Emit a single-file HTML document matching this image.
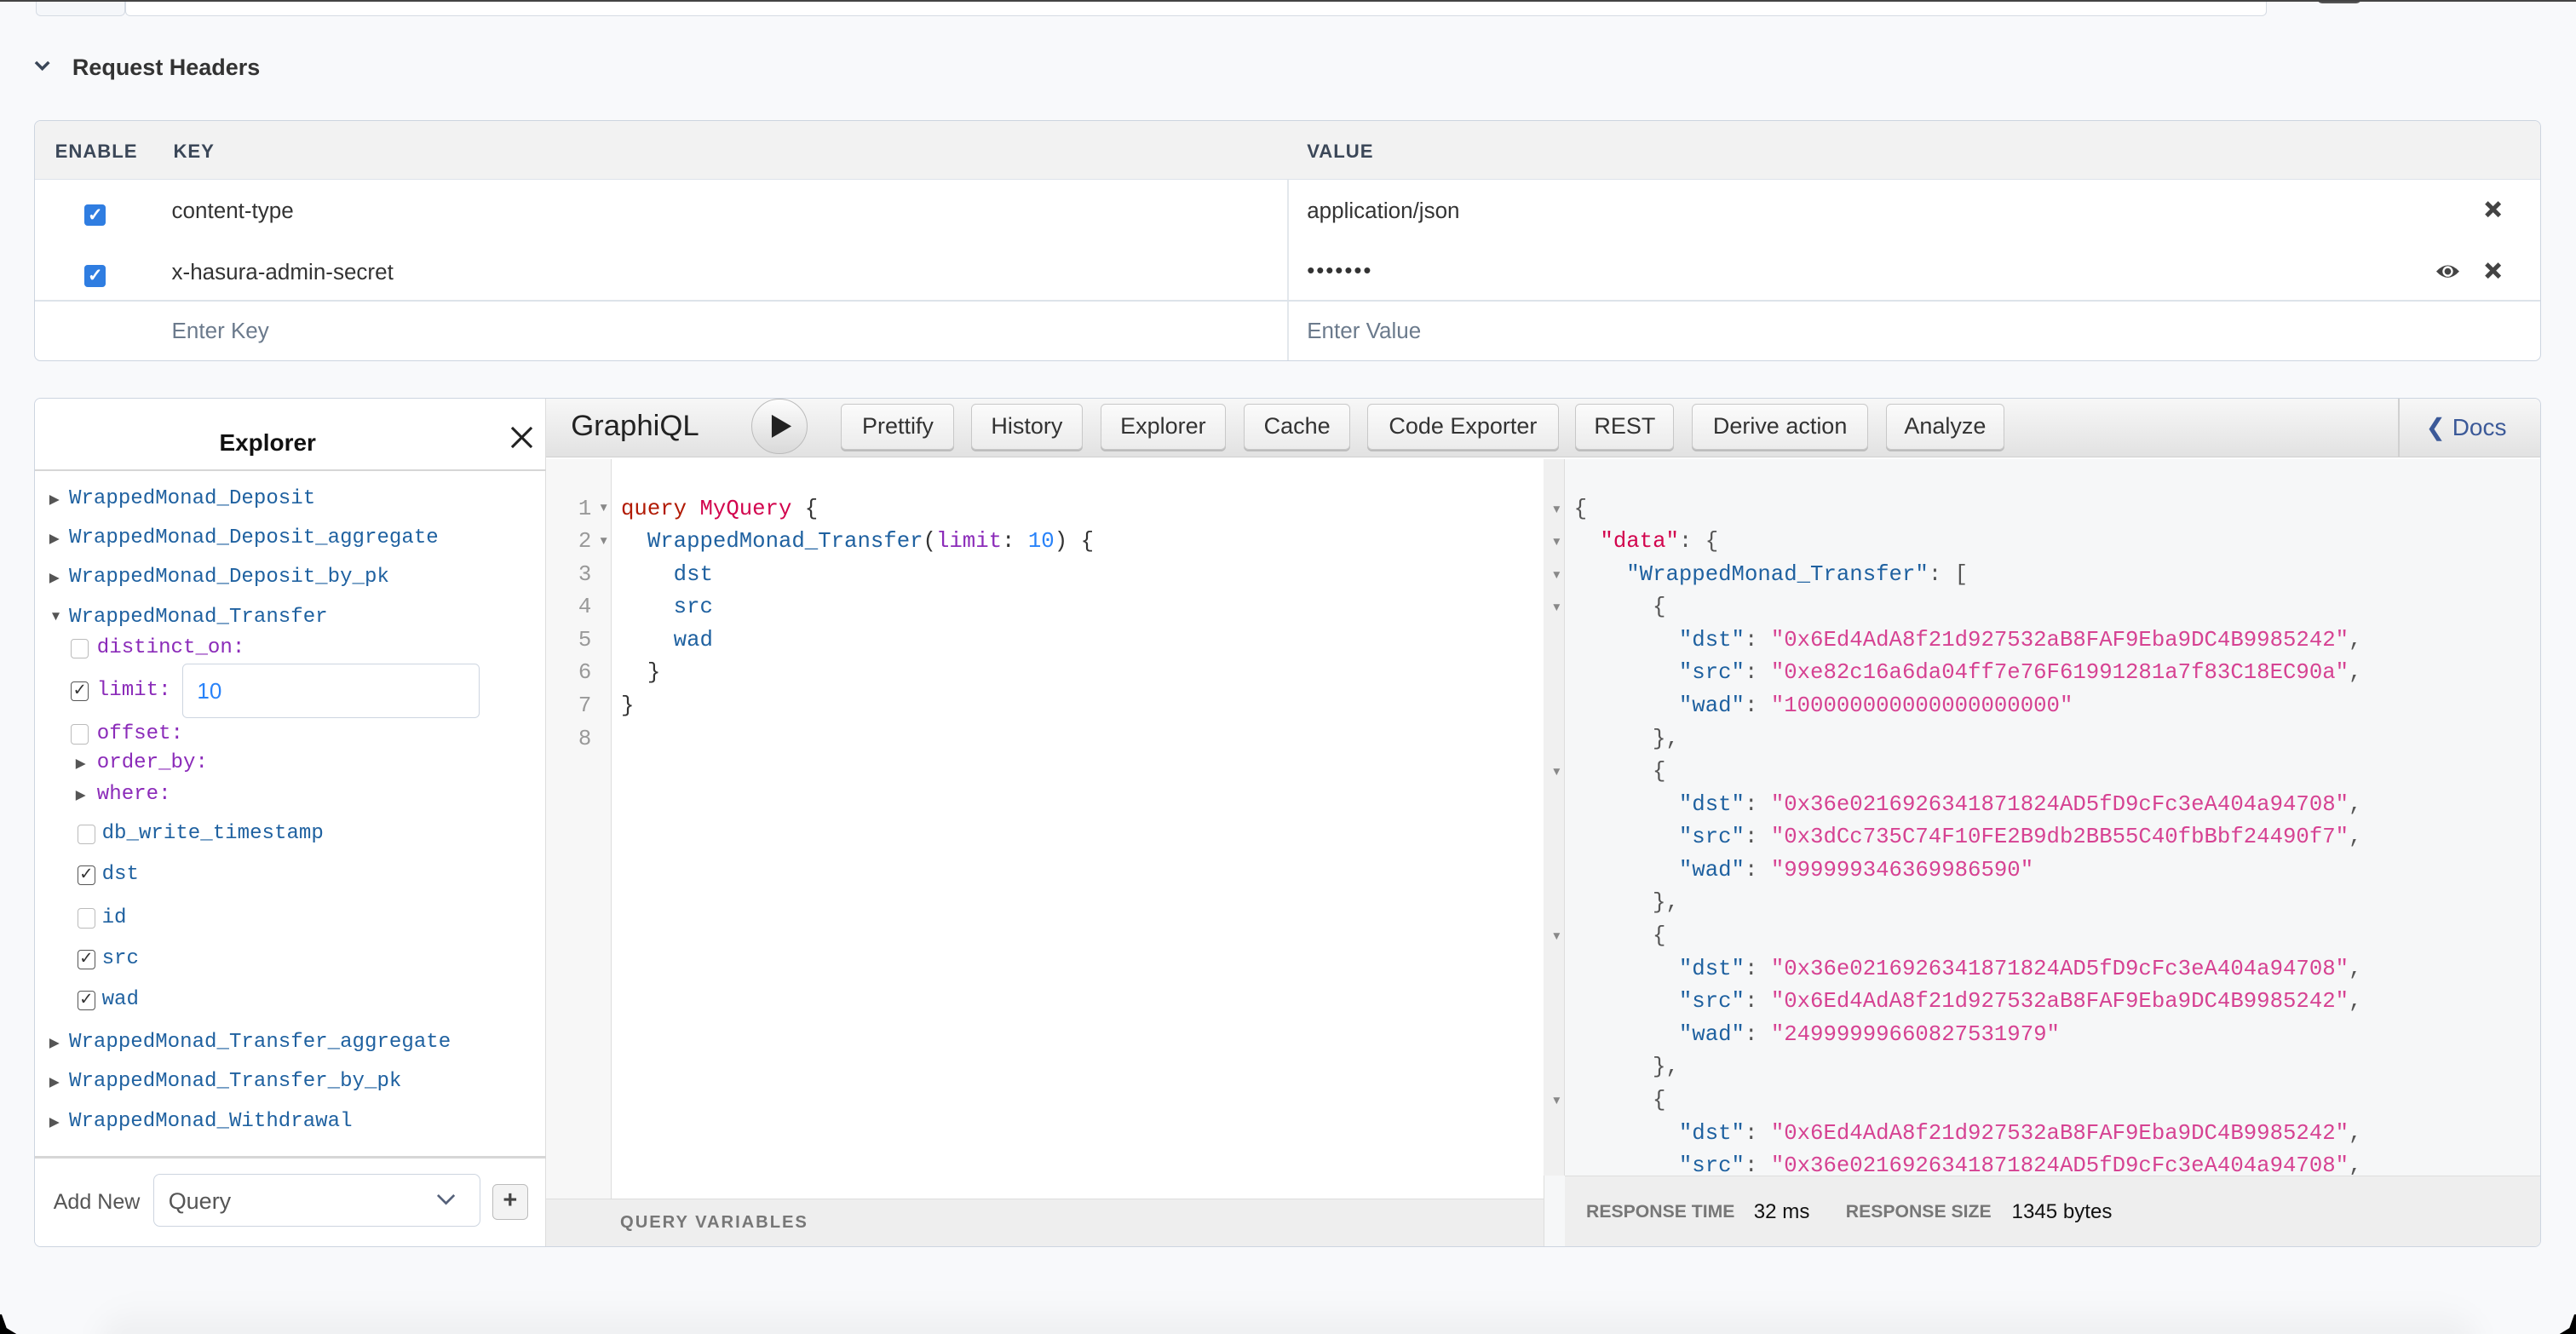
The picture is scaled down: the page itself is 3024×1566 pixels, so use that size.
<!DOCTYPE html>
<html><head><meta charset="utf-8"><style>
*{box-sizing:border-box;margin:0;padding:0}
html,body{width:3024px;height:1566px;overflow:hidden;background:#f8f9fb}
#w{zoom:1.92857;width:1568px;height:812px;position:relative;font-family:"Liberation Sans",sans-serif;color:#333;background:#f8f9fb;overflow:hidden}
.a{position:absolute}
.hd{font-size:11.5px;font-weight:bold;color:#3b4758;letter-spacing:.5px}
.cb{width:13px;height:13px;background:#2f7de1;border-radius:2px;color:#fff;font-size:11px;line-height:13px;text-align:center;font-weight:bold}
.btn{position:absolute;top:246px;height:28px;border:1px solid #c8c8c8;border-radius:3px;background:linear-gradient(#fbfbfb,#ececec);font-size:14px;line-height:26px;text-align:center;color:#333;box-shadow:0 1px 0 #bbb}
.ex{position:absolute;left:42px;font-size:12.5px;color:#1f61a0;font-family:"Liberation Mono",monospace;line-height:16px}
.tri{position:absolute;font-size:8px;color:#555}
.ck{position:absolute;width:11px;height:12px;border:1px solid #bbb;border-radius:2px;background:#fff;font-size:10px;line-height:10px;text-align:center;color:#333}
.ck.on{border-color:#555}
.ql{position:absolute;left:378px;font-size:13.33px;line-height:20px;white-space:pre;font-family:"Liberation Mono",monospace}
.ln{position:absolute;left:340px;width:20px;text-align:right;font-size:13.33px;color:#999;font-family:"Liberation Mono",monospace;line-height:20px}
.rl{position:absolute;left:958px;font-size:13.33px;line-height:20px;white-space:pre;font-family:"Liberation Mono",monospace;color:#555}
.k{color:#1f61a0}.s{color:#d64292}.r{color:#b11a04}
</style></head><body><div id="w">
<div class="a" style="left:22px;top:-10px;width:54px;height:20px;border:1px solid #d5dbe3;border-radius:3px;background:#f5f7fa"></div>
<div class="a" style="left:76px;top:-10px;width:1304px;height:20px;border:1px solid #d5dbe3;border-radius:3px;background:#fff"></div>
<div class="a" style="left:1410px;top:-6px;width:28px;height:8px;border-radius:4px;background:#555"></div>
<div class="a" style="left:0;top:0;width:1568px;height:1px;background:#444"></div>
<svg class="a" style="left:21px;top:37px" width="10" height="7"><path d="M1 1L5 5L9 1" stroke="#3b4758" stroke-width="1.8" fill="none"/></svg>
<div class="a" style="left:44px;top:33px;font-size:14px;font-weight:bold;color:#333">Request Headers</div>
<div class="a" style="left:21px;top:73px;width:1526px;height:147px;border:1px solid #cdd5e0;border-radius:4px;background:#fff;overflow:hidden">
 <div class="a" style="left:0;top:0;width:100%;height:36px;background:#f2f2f2;border-bottom:1px solid #dde3ea"></div>
 <div class="a hd" style="left:12px;top:12px">ENABLE</div>
 <div class="a hd" style="left:84px;top:12px">KEY</div>
 <div class="a hd" style="left:774px;top:12px">VALUE</div>
 <div class="a" style="left:762px;top:36px;width:1px;height:111px;background:#e3e7ec"></div>
 <div class="a" style="left:0;top:109px;width:100%;height:1px;background:#dde3ea"></div>
 <div class="a cb" style="left:30px;top:51px">&#10003;</div>
 <div class="a cb" style="left:30px;top:88px">&#10003;</div>
 <div class="a" style="left:83px;top:47px;font-size:13.5px;color:#333">content-type</div>
 <div class="a" style="left:83px;top:84px;font-size:13.5px;color:#333">x-hasura-admin-secret</div>
 <div class="a" style="left:83px;top:120px;font-size:13.5px;color:#6b7a8c">Enter Key</div>
 <div class="a" style="left:774px;top:47px;font-size:13.5px;color:#333">application/json</div>
 <div class="a" style="left:774px;top:83px;font-size:13.5px;color:#333;letter-spacing:1px">•••••••</div>
 <div class="a" style="left:774px;top:120px;font-size:13.5px;color:#6b7a8c">Enter Value</div>
 <svg class="a" style="left:1491px;top:49px" width="10" height="10"><path d="M1 1L9 9M9 1L1 9" stroke="#444" stroke-width="2.6"/></svg>
 <svg class="a" style="left:1491px;top:86px" width="10" height="10"><path d="M1 1L9 9M9 1L1 9" stroke="#444" stroke-width="2.6"/></svg>
 <svg class="a" style="left:1461px;top:86px" width="15" height="11" viewBox="0 0 15 11"><path d="M0.5 5.5Q7.5 -2 14.5 5.5Q7.5 13 0.5 5.5Z" fill="#444"/><circle cx="7.5" cy="5.5" r="3.2" fill="#fff"/><circle cx="7.5" cy="5.5" r="2" fill="#444"/></svg>
</div>
<div class="a" style="left:21px;top:242px;width:1526px;height:517px;border:1px solid #cdd5e0;border-radius:4px;background:#fff;overflow:hidden">
 <div class="a" style="left:0;top:0;width:311px;height:517px;background:#fff;border-right:1px solid #ddd">
  <div class="a" style="left:0;top:0;width:311px;height:44px;border-bottom:1.5px solid #d6d6d6"></div>
  <div class="a" style="left:112px;top:19px;font-size:14.5px;font-weight:bold;color:#111">Explorer</div>
  <svg class="a" style="left:289px;top:17px" width="14" height="14"><path d="M1 1L13 13M13 1L1 13" stroke="#222" stroke-width="1.6"/></svg>
  <div class="a" style="left:0;top:461px;width:311px;height:1.5px;background:#d6d6d6"></div>
  <div class="a" style="left:11px;top:482px;font-size:13px;color:#555">Add New</div>
  <div class="a" style="left:72px;top:472px;width:199px;height:32px;border:1px solid #cdd5e0;border-radius:4px;background:#fff"></div>
  <div class="a" style="left:81px;top:481px;font-size:14px;color:#555">Query</div>
  <svg class="a" style="left:244px;top:484px" width="12" height="8"><path d="M1 1L6 6L11 1" stroke="#55617a" stroke-width="1.4" fill="none"/></svg>
  <div class="a" style="left:278px;top:478px;width:22px;height:22px;border:1px solid #bbb;border-radius:3px;background:#f3f3f3;text-align:center;font-size:15px;font-weight:bold;line-height:19px;color:#444">+</div>
 </div>
 <div class="a" style="left:311px;top:0;width:1215px;height:36px;background:linear-gradient(#f7f7f7,#e2e2e2);border-bottom:1px solid #d0d0d0"></div>
 <div class="a" style="left:326px;top:7px;font-size:18px;color:#222">GraphiQL</div>
 <div class="a" style="left:436px;top:0;width:34px;height:34px;border-radius:50%;border:1px solid #bbb;background:linear-gradient(#fdfdfd,#d9d9d9)"></div>
 <svg class="a" style="left:447px;top:9px" width="14" height="16"><path d="M1 1L13 8L1 15Z" fill="#222"/></svg>
 <div class="a" style="left:1438px;top:0;width:1px;height:36px;background:#d0d0d0"></div>
 <div class="a" style="left:1455px;top:9px;font-size:14.5px;color:#3b5998">&#10094; Docs</div>
 <div class="a" style="left:311px;top:37px;width:40px;height:450px;background:#f7f7f7;border-right:1px solid #ddd"></div>
 <div class="a" style="left:918px;top:37px;width:608px;height:480px;background:#f6f7f8;border-left:1px solid #ddd"></div>
 <div class="a" style="left:918px;top:37px;width:13px;height:436px;background:#f0f0f0;border-right:1px solid #ddd"></div>
 <div class="a" style="left:311px;top:487px;width:607px;height:30px;background:#eeeeee;border-top:1px solid #ddd"></div>
 <div class="a" style="left:356px;top:496px;font-size:10.5px;font-weight:bold;color:#777;letter-spacing:1px">QUERY VARIABLES</div>
 <div class="a" style="left:931px;top:473px;width:595px;height:44px;background:#eeeeee;border-top:1px solid #ddd"></div>
 <div class="a" style="left:944px;top:489px;font-size:11px;font-weight:bold;color:#777">RESPONSE TIME</div>
 <div class="a" style="left:1046px;top:488px;font-size:12.5px;color:#111">32 ms</div>
 <div class="a" style="left:1102px;top:489px;font-size:11px;font-weight:bold;color:#777">RESPONSE SIZE</div>
 <div class="a" style="left:1203px;top:488px;font-size:12.5px;color:#111">1345 bytes</div>
</div>
<div class="btn" style="left:512px;width:69px">Prettify</div>
<div class="btn" style="left:591px;width:68px">History</div>
<div class="btn" style="left:670px;width:76px">Explorer</div>
<div class="btn" style="left:757px;width:65px">Cache</div>
<div class="btn" style="left:832px;width:117px">Code Exporter</div>
<div class="btn" style="left:959px;width:60px">REST</div>
<div class="btn" style="left:1030px;width:107px">Derive action</div>
<div class="btn" style="left:1148px;width:72px">Analyze</div>
<div class="tri" style="left:30px;top:299px">&#9654;</div><div class="ex" style="top:296px">WrappedMonad_Deposit</div>
<div class="tri" style="left:30px;top:323px">&#9654;</div><div class="ex" style="top:320px">WrappedMonad_Deposit_aggregate</div>
<div class="tri" style="left:30px;top:347px">&#9654;</div><div class="ex" style="top:344px">WrappedMonad_Deposit_by_pk</div>
<div class="tri" style="left:30px;top:371px">&#9660;</div><div class="ex" style="top:368px">WrappedMonad_Transfer</div>
<div class="ck" style="left:43px;top:389px"></div><div class="ex" style="left:59px;top:387px;color:#8b2bb9">distinct_on:</div>
<div class="ck on" style="left:43px;top:415px">&#10003;</div><div class="ex" style="left:59px;top:413px;color:#8b2bb9">limit:</div>
<div class="a" style="left:111px;top:404px;width:181px;height:33px;border:1px solid #cdd5e0;border-radius:3px;background:#fff"></div>
<div class="a" style="left:120px;top:413px;font-size:13.5px;color:#2882f9">10</div>
<div class="ck" style="left:43px;top:441px"></div><div class="ex" style="left:59px;top:439px;color:#8b2bb9">offset:</div>
<div class="tri" style="left:46px;top:460px">&#9654;</div><div class="ex" style="left:59px;top:457px;color:#8b2bb9">order_by:</div>
<div class="tri" style="left:46px;top:479px">&#9654;</div><div class="ex" style="left:59px;top:476px;color:#8b2bb9">where:</div>
<div class="ck" style="left:47px;top:502px"></div><div class="ex" style="left:62px;top:500px">db_write_timestamp</div>
<div class="ck on" style="left:47px;top:527px">&#10003;</div><div class="ex" style="left:62px;top:525px">dst</div>
<div class="ck" style="left:47px;top:553px"></div><div class="ex" style="left:62px;top:551px">id</div>
<div class="ck on" style="left:47px;top:578px">&#10003;</div><div class="ex" style="left:62px;top:576px">src</div>
<div class="ck on" style="left:47px;top:603px">&#10003;</div><div class="ex" style="left:62px;top:601px">wad</div>
<div class="tri" style="left:30px;top:630px">&#9654;</div><div class="ex" style="top:627px">WrappedMonad_Transfer_aggregate</div>
<div class="tri" style="left:30px;top:654px">&#9654;</div><div class="ex" style="top:651px">WrappedMonad_Transfer_by_pk</div>
<div class="tri" style="left:30px;top:678px">&#9654;</div><div class="ex" style="top:675px">WrappedMonad_Withdrawal</div>
<div class="ln" style="top:300px">1<br>2<br>3<br>4<br>5<br>6<br>7<br>8</div>
<div class="a" style="left:364px;top:305px;font-size:7px;color:#888">&#9660;</div>
<div class="a" style="left:364px;top:325px;font-size:7px;color:#888">&#9660;</div>
<div class="ql" style="top:300px"><span class="r">query</span> <span style="color:#d2054e">MyQuery</span> {
  <span class="k">WrappedMonad_Transfer</span>(<span style="color:#8b2bb9">limit</span>: <span style="color:#2882f9">10</span>) {
    <span class="k">dst</span>
    <span class="k">src</span>
    <span class="k">wad</span>
  }
}</div>
<div class="a" style="left:944px;top:300px;font-size:7px;color:#888;line-height:20px">&#9660;<br>&#9660;<br>&#9660;<br>&#9660;<br><br><br><br><br>&#9660;<br><br><br><br><br>&#9660;<br><br><br><br><br>&#9660;</div>
<div class="a" style="left:953px;top:280px;width:594px;height:435px;overflow:hidden">
<div class="rl" style="left:5px;top:20px">{
  <span style="color:#d2054e">"data"</span>: {
    <span class="k">"WrappedMonad_Transfer"</span>: [
      {
        <span class="k">"dst"</span>: <span class="s">"0x6Ed4AdA8f21d927532aB8FAF9Eba9DC4B9985242"</span>,
        <span class="k">"src"</span>: <span class="s">"0xe82c16a6da04ff7e76F61991281a7f83C18EC90a"</span>,
        <span class="k">"wad"</span>: <span class="s">"100000000000000000000"</span>
      },
      {
        <span class="k">"dst"</span>: <span class="s">"0x36e0216926341871824AD5fD9cFc3eA404a94708"</span>,
        <span class="k">"src"</span>: <span class="s">"0x3dCc735C74F10FE2B9db2BB55C40fbBbf24490f7"</span>,
        <span class="k">"wad"</span>: <span class="s">"999999346369986590"</span>
      },
      {
        <span class="k">"dst"</span>: <span class="s">"0x36e0216926341871824AD5fD9cFc3eA404a94708"</span>,
        <span class="k">"src"</span>: <span class="s">"0x6Ed4AdA8f21d927532aB8FAF9Eba9DC4B9985242"</span>,
        <span class="k">"wad"</span>: <span class="s">"24999999660827531979"</span>
      },
      {
        <span class="k">"dst"</span>: <span class="s">"0x6Ed4AdA8f21d927532aB8FAF9Eba9DC4B9985242"</span>,
        <span class="k">"src"</span>: <span class="s">"0x36e0216926341871824AD5fD9cFc3eA404a94708"</span>,
      }</div>
</div>
<div class="a" style="left:60px;top:792px;width:1448px;height:30px;background:linear-gradient(rgba(0,0,0,0),rgba(0,0,0,.06));border-radius:30px 30px 0 0;filter:blur(8px)"></div>
<div class="a" style="left:0;top:800px;width:10px;height:12px;background:#000;clip-path:polygon(0 0,10% 0,40% 70%,100% 100%,0 100%)"></div>
<div class="a" style="left:1558px;top:800px;width:10px;height:12px;background:#000;clip-path:polygon(90% 0,100% 0,100% 100%,0 100%,60% 70%)"></div>
</div></body></html>
